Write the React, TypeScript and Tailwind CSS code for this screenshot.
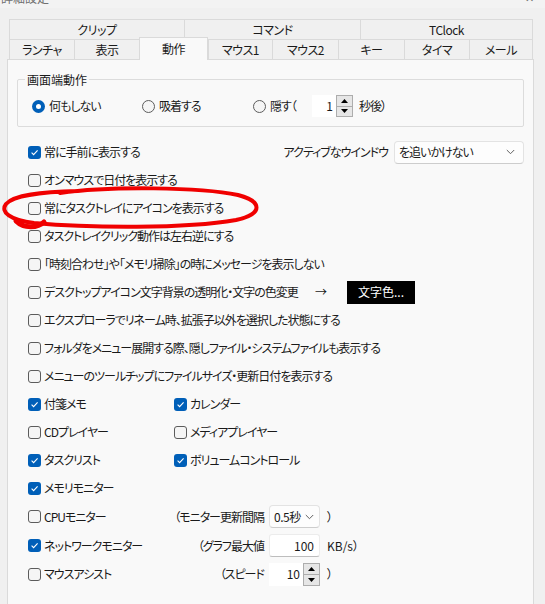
import React from "react";

/** Blue filled box when checked, grey outline otherwise */
function CheckBox({ checked = false }: { checked?: boolean }) {
  if (checked) {
    return (
      <span className="flex h-[13px] w-[13px] flex-none items-center justify-center rounded-[3px] bg-[#005fb8]">
        <svg width="9" height="9" viewBox="0 0 9 9">
          <path d="M1.6 4.7 L3.6 6.7 L7.6 2.4" fill="none" stroke="white" strokeWidth="1.1" />
        </svg>
      </span>
    );
  }
  return <span className="h-[13px] w-[13px] flex-none rounded-[3px] border border-[#5c5c5c] bg-[#f5f5f5]" />;
}

function Radio({ checked = false }: { checked?: boolean }) {
  if (checked) {
    return (
      <span className="flex h-[13px] w-[13px] flex-none items-center justify-center rounded-full bg-[#005fb8]">
        <span className="h-[5px] w-[5px] rounded-full bg-white" />
      </span>
    );
  }
  return <span className="h-[13px] w-[13px] flex-none rounded-full border border-[#5c5c5c] bg-[#f5f5f5]" />;
}

function Check({ label, checked = false }: { label: string; checked?: boolean }) {
  return (
    <span className="flex items-center gap-[3px] whitespace-nowrap">
      <CheckBox checked={checked} />
      <span>{label}</span>
    </span>
  );
}

function Chevron() {
  return (
    <svg width="9" height="6" viewBox="0 0 9 6" className="flex-none">
      <path d="M0.8 1 L4.5 4.7 L8.2 1" fill="none" stroke="#606060" strokeWidth="1" />
    </svg>
  );
}

function Select({ value, className = "" }: { value: string; className?: string }) {
  return (
    <div
      className={`flex items-center justify-between rounded-[4px] border border-[#e3e3e3] border-b-[#cdcdcd] bg-[#fdfdfd] pl-[4px] ${className}`}
    >
      <span className="whitespace-nowrap">{value}</span>
      <Chevron />
    </div>
  );
}

function Triangle({ up }: { up: boolean }) {
  return (
    <svg width="7" height="4" viewBox="0 0 7 4">
      <path d={up ? "M3.5 0 L7 4 L0 4 Z" : "M0 0 L7 0 L3.5 4 Z"} fill="#000" />
    </svg>
  );
}

function Spin({ value, inputW, h }: { value: string; inputW: string; h: string }) {
  return (
    <div className={`flex ${h}`}>
      <div className={`flex items-center justify-end bg-white pr-[3px] tracking-normal ${inputW}`}>{value}</div>
      <div className="flex w-[17px] flex-col border border-[#adadad] bg-[#e6e6e6]">
        <div className="flex flex-1 items-center justify-center border-b border-[#adadad]">
          <Triangle up />
        </div>
        <div className="flex flex-1 items-center justify-center">
          <Triangle up={false} />
        </div>
      </div>
    </div>
  );
}

const tabsTop = [
  { label: "クリップ", w: "w-[175px]" },
  { label: "コマンド", w: "w-[176px]" },
  { label: "TClock", w: "w-[173px]" },
];

const tabsBottom = [
  { label: "ランチャ", w: "w-[65px]" },
  { label: "表示", w: "w-[65px]" },
  { label: "動作", w: "w-[69px]", active: true },
  { label: "マウス1", w: "w-[64px]" },
  { label: "マウス2", w: "w-[66px]" },
  { label: "キー", w: "w-[66px]" },
  { label: "タイマ", w: "w-[65px]" },
  { label: "メール", w: "w-[64px]", last: true },
];

export default function App() {
  return (
    <div className="relative h-[604px] w-[545px] overflow-hidden bg-[#f0f0f0] font-['Noto_Sans_CJK_JP','Noto_Sans',sans-serif] text-[12px] leading-[16px] tracking-[-1px] text-[#1a1a1a] [font-feature-settings:'palt']">
      {/* title bar, mostly scrolled off the top */}
      <div className="flex h-[8px] justify-between overflow-hidden bg-[#f3f3f3] tracking-normal text-[#707070]">
        <span className="ml-[1px] -mt-[10px]">詳細設定</span>
        <span className="mr-[11px] -mt-[11px] text-[11px]">✕</span>
      </div>

      {/* tabs */}
      <div className="ml-[9px] mt-[11px] w-[524px] tracking-[-0.5px]">
        <div className="flex h-[20px]">
          {tabsTop.map((t, i) => (
            <div
              key={t.label}
              className={`flex items-center justify-center border-l border-t border-[#dadada] ${t.w} ${i === 2 ? "border-r" : ""}`}
            >
              {t.label}
            </div>
          ))}
        </div>
        <div className="flex h-[20px]">
          {tabsBottom.map((t) =>
            t.active ? (
              <div
                key={t.label}
                className={`relative z-10 -mt-[2px] flex h-[23px] flex-none justify-center border-x border-t border-[#dadada] bg-[#f9f9f9] pt-[3px] ${t.w}`}
              >
                {t.label}
              </div>
            ) : (
              <div
                key={t.label}
                className={`flex flex-none items-center justify-center border-l border-t border-[#dadada] ${t.w} ${t.last ? "border-r" : ""}`}
              >
                {t.label}
              </div>
            )
          )}
        </div>
      </div>

      {/* page */}
      <div className="ml-[7px] h-[600px] w-[527px] border border-[#dadada] bg-[#f9f9f9] px-[9px]">
        <div className="relative mt-[19px] h-[48px] rounded-[2px] border border-[#dcdcdc]">
          <span className="absolute -top-[8px] left-[7px] bg-[#f9f9f9] px-[2px] tracking-normal">画面端動作</span>
          <div className="mt-[15px] flex h-[22px] items-center pl-[14px]">
            <span className="flex w-[110px] items-center gap-[4px]">
              <Radio checked />
              何もしない
            </span>
            <span className="flex w-[111px] items-center gap-[4px]">
              <Radio />
              吸着する
            </span>
            <span className="flex items-center gap-[4px]">
              <Radio />
              <span className="w-[42px] whitespace-nowrap">隠す（</span>
            </span>
            <Spin value="1" inputW="w-[24px]" h="h-[22px]" />
            <span className="ml-[6px]">秒後）</span>
          </div>
        </div>

        <div className="mt-[11px] pl-[11px]">
          <div className="flex h-[28px] items-center justify-between">
            <Check label="常に手前に表示する" checked />
            <span className="flex items-center gap-[6px]">
              アクティブなウインドウ
              <Select value="を追いかけない" className="h-[23px] w-[130px] pr-[8px]" />
            </span>
          </div>
          <div className="flex h-[28px] items-center">
            <Check label="オンマウスで日付を表示する" />
          </div>
          <div className="flex h-[28px] items-center">
            <Check label="常にタスクトレイにアイコンを表示する" />
          </div>
          <div className="flex h-[28px] items-center">
            <Check label="タスクトレイクリック動作は左右逆にする" />
          </div>
          <div className="flex h-[28px] items-center">
            <Check label="「時刻合わせ」や「メモリ掃除」の時にメッセージを表示しない" />
          </div>
          <div className="flex h-[28px] items-center">
            <span className="w-[287px] flex-none">
              <Check label="デスクトップアイコン文字背景の透明化・文字の色変更" />
            </span>
            <span className="w-[32px] flex-none">→</span>
            <span className="flex h-[23px] w-[68px] items-center justify-center bg-black tracking-normal text-white">
              文字色...
            </span>
          </div>
          <div className="flex h-[28px] items-center">
            <Check label="エクスプローラでリネーム時、拡張子以外を選択した状態にする" />
          </div>
          <div className="flex h-[28px] items-center">
            <Check label="フォルダをメニュー展開する際、隠しファイル・システムファイルも表示する" />
          </div>
          <div className="flex h-[28px] items-center">
            <Check label="メニューのツールチップにファイルサイズ・更新日付を表示する" />
          </div>
          <div className="flex h-[28px] items-center">
            <span className="w-[146px] flex-none">
              <Check label="付箋メモ" checked />
            </span>
            <Check label="カレンダー" checked />
          </div>
          <div className="flex h-[28px] items-center">
            <span className="w-[146px] flex-none">
              <Check label="CDプレイヤー" />
            </span>
            <Check label="メディアプレイヤー" />
          </div>
          <div className="flex h-[28px] items-center">
            <span className="w-[146px] flex-none">
              <Check label="タスクリスト" checked />
            </span>
            <Check label="ボリュームコントロール" checked />
          </div>
          <div className="flex h-[28px] items-center">
            <Check label="メモリモニター" checked />
          </div>
          <div className="flex h-[29px] items-center">
            <span className="flex w-[236px] flex-none items-center justify-between">
              <Check label="CPUモニター" />
              <span>（モニター更新間隔</span>
            </span>
            <Select value="0.5秒" className="ml-[5px] h-[23px] w-[51px] pr-[5px] tracking-[-0.5px]" />
            <span className="ml-[7px]">）</span>
          </div>
          <div className="flex h-[29px] items-center">
            <span className="flex w-[236px] flex-none items-center justify-between">
              <Check label="ネットワークモニター" checked />
              <span>（グラフ最大値</span>
            </span>
            <div className="ml-[5px] flex h-[23px] w-[51px] items-center justify-end rounded-[3px] border border-[#ececec] border-b-[#bdbdbd] bg-white pr-[5px] tracking-normal">
              100
            </div>
            <span className="ml-[7px] tracking-normal">KB/s）</span>
          </div>
          <div className="flex h-[28px] items-center">
            <span className="flex w-[236px] flex-none items-center justify-between">
              <Check label="マウスアシスト" />
              <span>（スピード</span>
            </span>
            <div className="ml-[5px]">
              <Spin value="10" inputW="w-[34px]" h="h-[23px]" />
            </div>
            <span className="ml-[7px]">）</span>
          </div>
        </div>
      </div>

      {/* red hand-drawn marker around one option */}
      <svg className="pointer-events-none absolute left-0 top-0" width="545" height="604" viewBox="0 0 545 604">
        <path
          d="M60 193 C110 186 200 187 238 195 C262 201 264 214 236 220 C185 229 90 228 34 223 C10 220 0 212 6 204 C14 195 40 192 78 191"
          fill="none"
          stroke="#f00000"
          strokeWidth="4"
          strokeLinecap="round"
        />
        <path d="M16 221 C24 229 38 228 44 222" fill="none" stroke="#f00000" strokeWidth="5" strokeLinecap="round" />
      </svg>
    </div>
  );
}
